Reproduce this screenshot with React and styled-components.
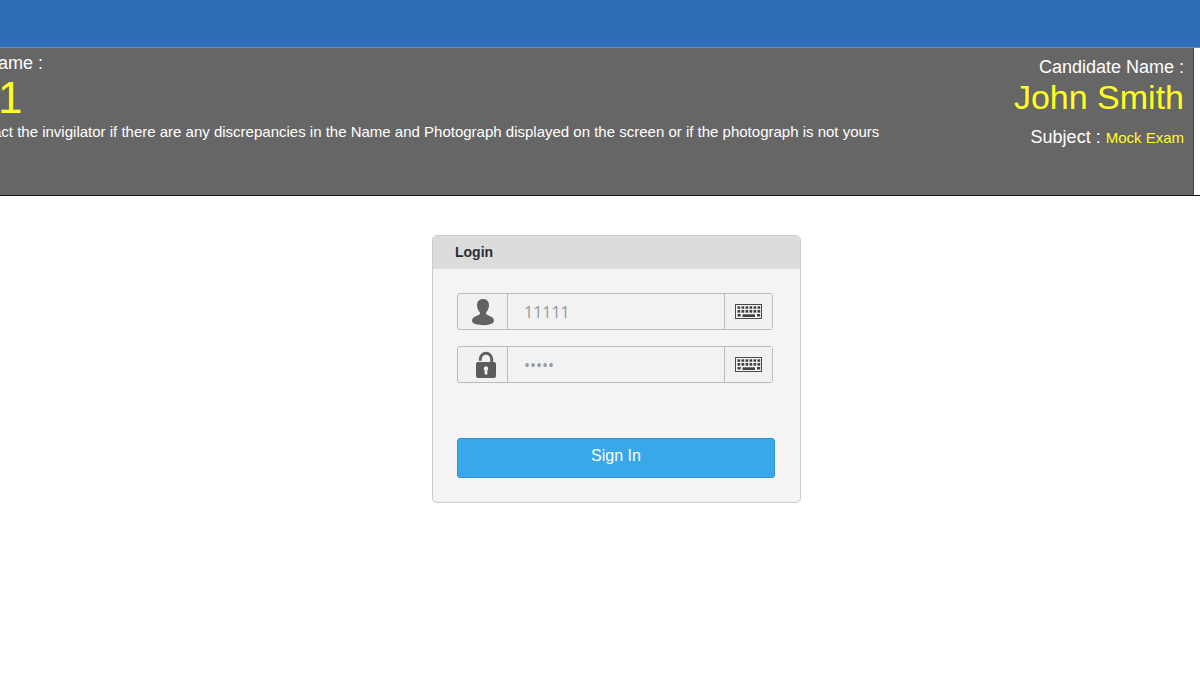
import React from 'react';
import styled, { createGlobalStyle } from 'styled-components';

const GlobalStyle = createGlobalStyle`
  * {
    box-sizing: border-box;
  }

  body {
    margin: 0;
    background: #ffffff;
    font-family: "Liberation Sans", Arial, sans-serif;
    overflow-x: hidden;
  }
`;

const UserIcon = () => (
  <svg width="24" height="28" viewBox="0 0 24 28" fill="#626262" aria-hidden="true">
    <path d="M12 1C8.300 1 6 3.600 6 7c0 3 1.200 5.400 2.600 7 .6.800.7 1.800-.2 2.500C6.500 18 1 18.600 1 22.800c0 3 5 4.400 11 4.400s11-1.400 11-4.400c0-4.200-5.500-4.800-7.400-6.300-.9-.7-.8-1.700-.2-2.500C16.800 12.400 18 10 18 7c0-3.400-2.300-6-6-6z" />
  </svg>
);

const LockIcon = () => (
  <svg width="22" height="28" viewBox="0 0 22 28" aria-hidden="true">
    <path d="M5.300 9.800V8a5.700 5.700 0 0 1 11.400 0v3" fill="none" stroke="#626262" strokeWidth="3" />
    <rect x="1" y="11" width="20" height="16" rx="2" fill="#5c5c5c" />
    <path d="M11 15.200a2.400 2.400 0 0 1 1.300 4.300V23.500H9.700V19.500A2.400 2.400 0 0 1 11 15.200z" fill="#f4f4f4" />
  </svg>
);

const keyColumns = [3, 7, 11, 15, 19, 23];

const KeyboardIcon = () => (
  <svg width="28" height="16" viewBox="0 0 28 16" fill="#404040" aria-hidden="true">
    <rect x="0.500" y="0.500" width="26" height="14" fill="#f4f4f4" stroke="#4a4a4a" />
    {keyColumns.map((x) => (
      <React.Fragment key={x}>
        <rect x={x - 0.5} y="2.300" width="2.700" height="2.500" />
        <rect x={x - 0.5} y="6" width="2.700" height="2.700" />
      </React.Fragment>
    ))}
    <rect x="2.500" y="10" width="3.200" height="2.500" />
    <rect x="7.500" y="10.300" width="12.500" height="2.700" />
    <rect x="22" y="10" width="3.200" height="2.500" />
  </svg>
);

const Login = () => (
  <>
    <GlobalStyle />
    <TopBar />
    <Banner>
      <BannerPanel>
        <SystemInfo>
          <Label>ame :</Label>
          <SystemNumber>1</SystemNumber>
          <Notice>
            act the invigilator if there are any discrepancies in the Name and Photograph displayed on the screen or if the photograph is not yours
          </Notice>
        </SystemInfo>
        <CandidateInfo>
          <Label>Candidate Name :</Label>
          <CandidateName>John Smith</CandidateName>
          <Label>
            Subject : <Subject>Mock Exam</Subject>
          </Label>
        </CandidateInfo>
      </BannerPanel>
    </Banner>
    <Main>
      <Card onSubmit={(e) => e.preventDefault()}>
        <CardTitle>Login</CardTitle>
        <CardBody>
          <Field>
            <FieldLabel htmlFor="username" aria-label="Username">
              <UserIcon />
            </FieldLabel>
            <Input id="username" type="text" defaultValue="11111" />
            <KeyboardButton type="button" aria-label="Keyboard for username">
              <KeyboardIcon />
            </KeyboardButton>
          </Field>
          <Field>
            <FieldLabel htmlFor="password" aria-label="Password" $shifted>
              <LockIcon />
            </FieldLabel>
            <Input id="password" type="password" defaultValue="11111" />
            <KeyboardButton type="button" aria-label="Keyboard for password">
              <KeyboardIcon />
            </KeyboardButton>
          </Field>
          <SignIn type="submit">Sign In</SignIn>
        </CardBody>
      </Card>
    </Main>
  </>
);

const TopBar = styled.header`
  height: 48px;
  background: #2c6fb6;
  border-bottom: 1px solid #6790b4;
`;

const Banner = styled.section`
  padding-right: 6px;
  border-bottom: 1px solid #111111;
`;

const BannerPanel = styled.div`
  display: flex;
  justify-content: space-between;
  min-height: 147px;
  padding-right: 9px;
  background: #666666;
  border-right: 1px solid #444444;
  color: #ffffff;
`;

const SystemInfo = styled.div`
  margin-left: -2px;
  padding-top: 4px;
  white-space: nowrap;
`;

const CandidateInfo = styled.div`
  padding-top: 8px;
  text-align: right;
  white-space: nowrap;
`;

const Label = styled.div`
  font-size: 18px;
  line-height: 22px;
`;

const SystemNumber = styled.div`
  height: 47px;
  font-size: 44px;
  line-height: 48px;
  color: #ffff22;
`;

const CandidateName = styled.div`
  margin-bottom: 10px;
  font-size: 34px;
  line-height: 38px;
  color: #ffff22;
`;

const Notice = styled.p`
  margin: 0 0 0 -5px;
  font-size: 15px;
  line-height: 22px;
`;

const Subject = styled.span`
  font-size: 15px;
  color: #ffff22;
`;

const Main = styled.main`
  display: flex;
  justify-content: center;
  padding: 39px 0 40px 33px;
`;

const Card = styled.form`
  width: 369px;
  border: 1px solid #cccccc;
  border-radius: 5px;
  background: #f4f4f4;
  overflow: hidden;
`;

const CardTitle = styled.h1`
  margin: 0;
  padding: 0 22px;
  background: #dcdcdc;
  color: #2b2f33;
  font-size: 14px;
  font-weight: 700;
  line-height: 33px;
`;

const CardBody = styled.div`
  display: flex;
  flex-direction: column;
  gap: 16px;
  padding: 24px 25px 24px 24px;
`;

const Field = styled.div`
  display: flex;
  width: 316px;
  height: 37px;
  border: 1px solid #bbbbbb;
  border-radius: 3px;
  background: #f1f1f1;
`;

const FieldLabel = styled.label`
  display: flex;
  align-items: center;
  justify-content: center;
  width: 50px;
  padding-left: ${(props) => (props.$shifted ? '6px' : '0')};
  border-right: 1px solid #bbbbbb;
`;

const Input = styled.input`
  flex: 1;
  min-width: 0;
  padding: 0 16px;
  border: 0;
  outline: 0;
  background: #f2f2f2;
  color: #999999;
  font-family: "Open Sans", sans-serif;
  font-size: 16px;
`;

const KeyboardButton = styled.button`
  display: flex;
  align-items: center;
  justify-content: center;
  width: 48px;
  padding: 0;
  border: 0;
  border-left: 1px solid #bbbbbb;
  background: #f1f1f1;
  cursor: pointer;
`;

const SignIn = styled.button`
  height: 40px;
  margin-top: 39px;
  padding: 0 0 4px;
  border: 1px solid #3093d0;
  border-radius: 3px;
  background: #38a8e8;
  color: #ffffff;
  font-family: inherit;
  font-size: 16px;
  cursor: pointer;
`;

export default Login;
